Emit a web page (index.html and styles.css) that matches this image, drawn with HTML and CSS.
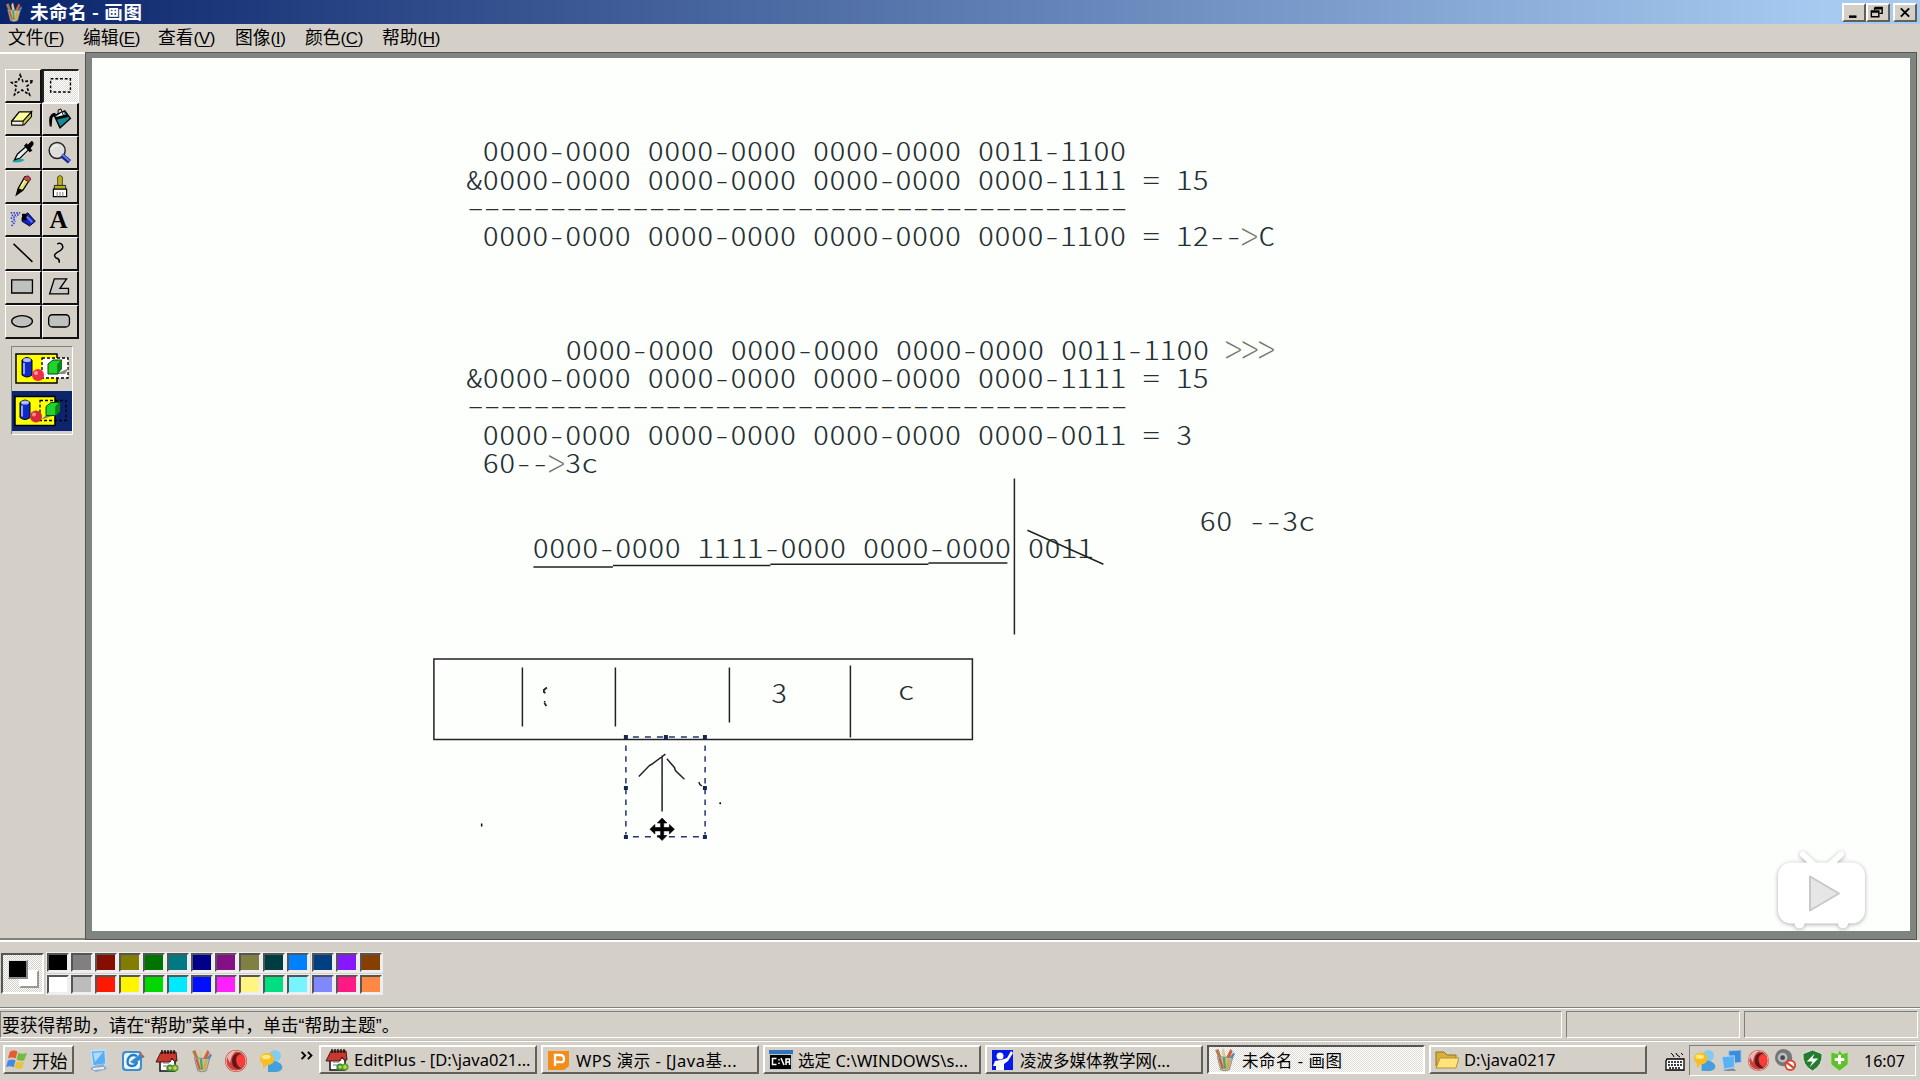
FILE: index.html
```html
<!DOCTYPE html>
<html lang="zh-CN">
<head>
<meta charset="utf-8">
<title>未命名 - 画图</title>
<link rel="stylesheet" href="styles.css">
</head>
<body>
<svg class="defs" width="0" height="0">
  <defs>
    <symbol id="paint" viewBox="0 0 20 22">
      <path d="M4 9L1 2L4 1L7 9Z" fill="#b57a4a"/><path d="M8 9L7 2L9 0L11 9Z" fill="#d9c9a0"/>
      <path d="M11 9L15 1L17 3L14 10Z" fill="#d8602c"/><path d="M14 9L18 4L19 6L16 11Z" fill="#5087c8"/>
      <path d="M3 8L17 9L14 20Q10 22 6 20Z" fill="#b8c0ad" stroke="#777c75" stroke-width=".7"/>
      <path d="M5 9L8 19" stroke="#d45a30" stroke-width="2"/><path d="M9 9L10 19" stroke="#54a34f" stroke-width="2"/><path d="M14 10L12 19" stroke="#e4a22f" stroke-width="2"/>
    </symbol>
    <symbol id="editplus" viewBox="0 0 24 24">
      <path d="M5 10H20V22H5Z" fill="#fff" stroke="#111" stroke-width="1.5"/>
      <path d="M6 3H21L22 12H19L17 9L15 13H1Z" fill="#c8382e" stroke="#4a1714"/>
      <path d="M7 1V5M10 1V5M13 1V5M16 1V5M19 1V5" stroke="#111" stroke-width="1.4"/>
      <path d="M8 14H14M8 17H12" stroke="#777"/>
      <circle cx="15" cy="19" r="3.6" fill="#338b35"/><circle cx="20" cy="19" r="3.6" fill="#58a82e"/><path d="M13 19H17M15 17V21M18 19H22M20 17V21" stroke="#f5df64"/>
    </symbol>
    <symbol id="ball" viewBox="0 0 24 24">
      <circle cx="12" cy="12" r="11" fill="#c9423c"/><circle cx="12" cy="12" r="10" fill="none" stroke="#efb9b0" stroke-width="1"/>
      <path d="M18 4Q8 3 8 12T18 20Q13 18 12 12T18 4Z" fill="#641615"/><path d="M14 8Q18 4 21 10Q21 16 16 18Q11 12 14 8" fill="#ff3c3a"/><path d="M3 8Q6 2 12 2Q7 6 6 14Z" fill="#fff" opacity=".6"/>
    </symbol>
    <symbol id="chat" viewBox="0 0 24 24">
      <circle cx="16" cy="7" r="6" fill="#82ccf2"/><path d="M9 15Q15 9 22 15Q26 21 18 23H9Z" fill="#459fdd"/>
      <path d="M1 10Q1 4 8 4T15 10T8 16L4 20V15Q1 13 1 10" fill="#f7bd21"/><ellipse cx="7" cy="8" rx="4.5" ry="2.3" fill="#ffe77d"/>
    </symbol>
  </defs>
</svg>
<div class="window">
  <header class="titlebar">
    <svg class="title-icon"><use href="#paint"/></svg>
    <h1>未命名 - 画图</h1>
    <div class="controls">
      <button><svg viewBox="0 0 24 18"><path d="M6 14H15" stroke="#000" stroke-width="3"/></svg></button>
      <button><svg viewBox="0 0 24 18"><path d="M8 3H17V10H14M8 3V6M4 7H13V14H4ZM7 4.5H17M4 8.5H13" fill="none" stroke="#000" stroke-width="1.7"/></svg></button>
      <button class="close"><svg viewBox="0 0 24 18"><path d="M7 4L17 14M17 4L7 14" stroke="#000" stroke-width="2.3"/></svg></button>
    </div>
  </header>
  <nav class="menubar">
    <span>文件<i>(<u>F</u>)</i></span><span>编辑<i>(<u>E</u>)</i></span><span>查看<i>(<u>V</u>)</i></span><span>图像<i>(<u>I</u>)</i></span><span>颜色<i>(<u>C</u>)</i></span><span>帮助<i>(<u>H</u>)</i></span>
  </nav>
  <main class="workspace">
    <aside class="toolbox">
      <div class="tools">
        <div class="tool"><svg viewBox="0 0 36 32"><path d="M15 5L18 12L29 11L22 17L25 26L17 21L9 26L11 17L6 13L13 12Z" fill="none" stroke="#000" stroke-width="1.7" stroke-dasharray="3 2"/></svg></div>
        <div class="tool active"><svg viewBox="0 0 36 32"><path d="M7 8H28V22H7Z" fill="none" stroke="#000" stroke-width="1.5" stroke-dasharray="3 2"/></svg></div>
        <div class="tool"><svg viewBox="0 0 36 32"><path d="M6 18L14 8H27L19 20H6Z" fill="#ffff9d" stroke="#000" stroke-width="1.4"/><path d="M6 18H18L27 8V13L19 22H6Z" fill="#d5d13b" stroke="#000" stroke-width="1.2"/><path d="M6 18H18V22H6Z" fill="#eee" stroke="#000"/></svg></div>
        <div class="tool"><svg viewBox="0 0 36 32"><path d="M12 12L23 7L29 15L18 25Z" fill="#138b99" stroke="#000" stroke-width="1.5"/><path d="M14 13L21 8L23 11L16 15Z" fill="#fff"/><path d="M14 15L26 12" stroke="#000" stroke-width="3"/><path d="M7 23Q5 10 12 9Q16 10 10 14L9 24" fill="#000"/><path d="M16 11V6L19 5L22 13" fill="none" stroke="#000"/></svg></div>
        <div class="tool"><svg viewBox="0 0 36 32"><path d="M6 26Q14 21 20 24Q14 28 6 26" fill="#27a6ac"/><path d="M9 24L12 18L22 9L25 12L15 22Z" fill="#e3f1ef" stroke="#000" stroke-width="1.3"/><path d="M19 9L22 6L23 8L27 4Q30 5 29 8L26 12L28 14L25 16Z"/></svg></div>
        <div class="tool"><svg viewBox="0 0 36 32"><circle cx="15" cy="14" r="8.5" fill="#dedfd9" stroke="#222" stroke-width="1.5"/><path d="M9 13Q11 8 16 9" stroke="#fff" fill="none"/><path d="M20 19L28 26" stroke="#172383" stroke-width="5"/><path d="M20 18L28 25" stroke="#6b7cf4" stroke-width="2"/></svg></div>
        <div class="tool"><svg viewBox="0 0 36 32"><path d="M11 25L13 18L20 6L25 9L18 20Z" fill="#e8df69" stroke="#000" stroke-width="1.4"/><path d="M20 6Q25 3 26 9L24 11L18 8Z" fill="#cb4548" stroke="#481717"/><path d="M13 18L18 20L11 25Z"/><path d="M16 16L20 9" stroke="#fff"/></svg></div>
        <div class="tool"><svg viewBox="0 0 36 32"><path d="M15.5 16V6Q18 3 20.500 6V16" fill="#b9b31f" stroke="#504b0d"/><path d="M12 15H24V20H12Z" fill="#b5b022" stroke="#222"/><path d="M11 19H25V27H11Z" fill="#fff" stroke="#000" stroke-width="1.3"/><path d="M15 22V27M18 22V27M21 22V27" stroke="#777"/></svg></div>
        <div class="tool"><svg viewBox="0 0 36 32"><path d="M17 13L23 8L31 17L25 22L17 17Z" fill="#1625cb" stroke="#000"/><path d="M17 9H22V16H17Z"/><path d="M5 8L15 8M6 11L14 10M5 14L11 12M6 18L10 14M6 22L10 17" stroke="#3444df" stroke-width="1.9" stroke-dasharray="1.6 1.3"/><path d="M22 12L28 18" stroke="#687df3" stroke-width="2"/></svg></div>
        <div class="tool letter">A</div>
        <div class="tool"><svg viewBox="0 0 36 32"><path d="M8 6L28 25" stroke="#000" stroke-width="1.6"/></svg></div>
        <div class="tool"><svg viewBox="0 0 36 32"><path d="M15 6Q20 4 21 9Q21 12 15 15Q10 18 14 21Q18 22 17 26" fill="none" stroke="#000" stroke-width="1.6"/></svg></div>
        <div class="tool"><svg viewBox="0 0 36 32"><path d="M6 8H28V22H6Z" fill="#bfc1be" stroke="#000" stroke-width="1.4"/></svg></div>
        <div class="tool"><svg viewBox="0 0 36 32"><path d="M12 7H25L18 17H27V23H7Z" fill="#c8c9c4" stroke="#000" stroke-width="1.4"/></svg></div>
        <div class="tool"><svg viewBox="0 0 36 32"><ellipse cx="17" cy="16" rx="11" ry="6" fill="#bfc1be" stroke="#000" stroke-width="1.4"/></svg></div>
        <div class="tool"><svg viewBox="0 0 36 32"><rect x="6" y="9" width="22" height="13" rx="4" fill="#bfc1be" stroke="#000" stroke-width="1.4"/></svg></div>
      </div>
      <div class="options">
        <svg class="option" viewBox="0 0 60 43"><rect x="4" y="6" width="41" height="29" fill="#ff0" stroke="#000" stroke-width="1.5"/><rect x="30" y="10" width="26" height="20" fill="#fff" stroke="#000" stroke-width="1.3" stroke-dasharray="3 2"/><path d="M10 12Q15 7 20 12V27Q15 31 10 27Z" fill="#1029c9" stroke="#000"/><ellipse cx="15" cy="12" rx="4" ry="2" fill="#adbdff"/><path d="M12 15V26" stroke="#8d9fff" stroke-width="2"/><path d="M44 26L57 20L53 26H42" fill="#888"/><path d="M36 16L41 12H50L46 16V26H36Z" fill="#20d32a" stroke="#064b08"/><path d="M46 16L50 12V21L46 26Z" fill="#068716"/><circle cx="26" cy="27" r="6" fill="#f12b4a"/><circle cx="24" cy="25" r="2" fill="#ff9da3"/></svg>
        <svg class="option selected" viewBox="0 0 60 39"><rect x="3" y="5" width="40" height="29" fill="#ff0" stroke="#000" stroke-width="1.5"/><rect x="28" y="9" width="26" height="20" fill="none" stroke="#000" stroke-width="1.3" stroke-dasharray="3 2"/><path d="M8 11Q13 6 18 11V26Q13 30 8 26Z" fill="#1029c9" stroke="#000"/><ellipse cx="13" cy="11" rx="4" ry="2" fill="#adbdff"/><path d="M10 14V25" stroke="#8d9fff" stroke-width="2"/><path d="M29 28L42 24H34" fill="#777"/><path d="M34 15L39 11H48L44 15V24H34Z" fill="#20d32a" stroke="#064b08"/><path d="M44 15L48 11V20L44 24Z" fill="#068716"/><circle cx="24" cy="25" r="6" fill="#d42a3f"/><circle cx="22" cy="23" r="2" fill="#ff8d8d"/></svg>
      </div>
    </aside>
    <section class="canvas">
      <svg class="drawing" viewBox="92 58 1818 873">
        <g class="digits">
          <text transform="translate(482.5 161) scale(1 .79)">0000-0000 0000-0000 0000-0000 0011-1100</text>
          <text transform="translate(466 189.5) scale(1 .79)">&amp;0000-0000 0000-0000 0000-0000 0000-1111 = 15</text>
          <text class="rule" transform="translate(464.5 216.500) scale(1.35 .79)">----------------------------------------</text>
          <text transform="translate(482.5 246) scale(1 .79)">0000-0000 0000-0000 0000-0000 0000-1100 = 12--</text>
          <text class="gt" transform="translate(1241.500 252.500) scale(1 1.35)">&gt;</text>
          <text transform="translate(1258.500 246) scale(1 .79)">C</text>
          <text transform="translate(565.500 359.500) scale(1 .79)">0000-0000 0000-0000 0000-0000 0011-1100</text>
          <text class="gt" transform="translate(1225.500 366) scale(1 1.35)">&gt;&gt;&gt;</text>
          <text transform="translate(466 388) scale(1 .79)">&amp;0000-0000 0000-0000 0000-0000 0000-1111 = 15</text>
          <text class="rule" transform="translate(464.5 415) scale(1.35 .79)">----------------------------------------</text>
          <text transform="translate(482.5 445) scale(1 .79)">0000-0000 0000-0000 0000-0000 0000-0011 = 3</text>
          <text transform="translate(482.5 473.300) scale(1 .79)">60--</text>
          <text class="gt" transform="translate(548.500 480) scale(1 1.35)">&gt;</text>
          <text transform="translate(565 473.300) scale(1 .79)">3c</text>
          <text transform="translate(532.5 558) scale(1 .79)">0000-0000 1111-0000 0000-0000 0011</text>
          <text transform="translate(1199.5 531) scale(1 .79)">60 --3c</text>
          <text transform="translate(771 702.5) scale(1 .79)">3</text>
          <text transform="translate(898 700) scale(1 .79)">c</text>
        </g>
        <g transform="translate(-.6 .5)">
          <g fill="none" stroke="#222" stroke-width="1.5">
            <path d="M1015 478V634M534 566.4H613.5M613.5 565H771M771 563.7H929M929 562.4H1008M1028 529.7L1104 563.7"/>
            <path d="M434.5 658.5H973V739H434.5ZM523 667V726M616 667V726M730 667V722M851 665V737"/>
            <path d="M662.7 755V811M666 753.7L652 764L650 765L639.4 776M667.5 758.3L675 767L676 770L685 778.7M699.5 781.5L700.5 784L702.5 785.5"/>
            <path d="M547.5 687L544.5 689.5V691.5L546 692.5M544.5 701L546 701.5M545 702.5L547 705.5" stroke-width="1.8"/>
          </g>
          <circle cx="720.8" cy="802.7" r="1"/><rect x="481.5" y="823" width="1.5" height="3"/>
          <g fill="none" stroke="#23356b" stroke-width="1.5"><path d="M633.5 736.5H706M633.5 836.3H706" stroke-dasharray="6 6"/><path d="M626.5 745V834M705.7 745V834" stroke-dasharray="5.5 5.3"/></g>
          <path d="M624.5 734.5h4v4h-4zM664.5 734.5h4v4h-4zM703.5 734.5h4v4h-4zM624.5 785.5h4v4h-4zM703.5 785.5h4v4h-4zM624.5 834.5h4v4h-4zM703.5 834.5h4v4h-4z" fill="#14245c"/>
          <path d="M662.7 817.5L667.5 822.5H664.3V827H670V824L675 828.7L670 833.5V830.4H664.3V835H667.5L662.7 840L658 835H661.2V830.4H655.5V833.5L650.5 828.7L655.5 824V827H661.2V822.5H658Z" stroke="#000" stroke-width=".6"/>
        </g>
        <g transform="translate(1 .5)">
          <g class="player"><path d="M1802 854L1815 866M1840 854L1827 866" stroke="#fff" stroke-width="6" stroke-linecap="round"/><circle cx="1798.500" cy="923" r="5" fill="#fff"/><circle cx="1842" cy="923" r="5" fill="#fff"/><rect x="1777" y="862" width="87" height="61" rx="13" fill="#fff"/></g>
          <path d="M1809 876L1838 893L1809 910Z" fill="#e6e6e6" stroke="#c8c8c8" stroke-width="2" stroke-linejoin="round"/>
        </g>
      </svg>
    </section>
  </main>
  <section class="palette">
    <div class="current"><b></b><em></em></div>
    <div class="swatches">
      <i class="c1"></i><i class="c2"></i><i class="c3"></i><i class="c4"></i><i class="c5"></i><i class="c6"></i><i class="c7"></i><i class="c8"></i><i class="c9"></i><i class="c10"></i><i class="c11"></i><i class="c12"></i><i class="c13"></i><i class="c14"></i>
      <i class="d1"></i><i class="d2"></i><i class="d3"></i><i class="d4"></i><i class="d5"></i><i class="d6"></i><i class="d7"></i><i class="d8"></i><i class="d9"></i><i class="d10"></i><i class="d11"></i><i class="d12"></i><i class="d13"></i><i class="d14"></i>
    </div>
  </section>
  <footer class="statusbar"><span class="help">要获得帮助，请在<q>“</q>帮助<q>”</q>菜单中，单击<q>“</q>帮助主题<q>”</q>。</span><span></span><span></span></footer>
  <div class="taskbar">
    <button class="start"><svg viewBox="0 0 24 22"><path d="M4 3Q8 0 12 3L10 10Q6 8 2 10Z" fill="#e65b30"/><path d="M13 4Q17 6 22 4L19 12Q15 13 11 11Z" fill="#76b943"/><path d="M2 12Q6 10 10 12L8 19Q4 17 0 19Z" fill="#4889df"/><path d="M11 13Q15 15 19 13L17 20Q13 22 9 19Z" fill="#edc137"/></svg>开始</button>
    <div class="quick">
      <svg viewBox="0 0 24 24"><path d="M5 2L19 1L20 15L7 17Z" fill="#58aef0" stroke="#b9dfff" stroke-width="1.5"/><path d="M7 4L17 3L9 13Z" fill="#afdbff"/><path d="M8 17L17 15L21 20L10 23L4 20Z" fill="#8fa9c7"/><path d="M7 20L18 19" stroke="#e5f2fa" stroke-width="2"/></svg>
      <svg viewBox="0 0 24 24"><rect x="1" y="2" width="20" height="20" rx="4" fill="#3b90d2"/><rect x="3" y="4" width="16" height="16" rx="3" fill="#eaf6ff"/><path d="M16 7Q10 4 7 10Q5 17 11 17Q15 17 16 13" fill="none" stroke="#237bc1" stroke-width="2.4"/><path d="M9 13L19 5L23 8L13 15Z" fill="#3489d0"/><path d="M19 5L23 8" stroke="#b56635" stroke-width="2"/></svg>
      <svg><use href="#editplus"/></svg><svg><use href="#paint"/></svg><svg><use href="#ball"/></svg><svg><use href="#chat"/></svg>
      <svg class="more" viewBox="0 0 14 10"><path d="M1 1L5 5L1 9M8 1L12 5L8 9" fill="none" stroke="#000" stroke-width="2"/></svg>
    </div>
    <div class="tasks">
      <button><svg><use href="#editplus"/></svg><span>EditPlus - [D:\java021...</span></button>
      <button><svg viewBox="0 0 24 24"><path d="M1 3H22V18L17 22H1Z" fill="#f58b18"/><path d="M8 18V7H13Q17 7 17 11T13 14H8" fill="none" stroke="#fff" stroke-width="2.3"/></svg><span class="wide">WPS 演示 - [Java基...</span></button>
      <button><svg viewBox="0 0 24 24"><rect y="2" width="24" height="20" fill="#b9c7d2"/><path d="M0 2H24V6H0Z" fill="#3274b6"/><path d="M1 7H22V21H1Z"/><path d="M7.500 10.500H3.500V16.500H7.500M10 11V12.500M10 14.500V16M12 10L15 17M20.500 17V11H17V17M17 14H20.500" fill="none" stroke="#fff" stroke-width="1.5"/></svg><span class="wide">选定 C:\WINDOWS\s...</span></button>
      <button><svg viewBox="0 0 24 24"><path d="M1 2H22V22H1Z" fill="#0719e6"/><circle cx="9" cy="8" r="3.5" fill="#fff"/><path d="M5 22V18H2L4 13L10 12L16 10L20 3L22 5L17 13L13 16V22Z" fill="#fff"/></svg><span>凌波多媒体教学网(...</span></button>
      <button class="current-task"><svg><use href="#paint"/></svg><span class="wide">未命名 - 画图</span></button>
      <button><svg viewBox="0 0 24 24"><path d="M1 18V4H9L12 7H21V19Z" fill="#ddaf37" stroke="#8b7229"/><path d="M1 20L5 10H24L21 20Z" fill="#ffe47e" stroke="#b39232"/></svg><span>D:\java0217</span></button>
    </div>
    <svg class="keyboard" viewBox="0 0 20 20"><path d="M6 1L8 3L9 5M11 1L12 3L15 5M16 1L18 3" fill="none" stroke="#000"/><path d="M2 7H19V18H1V9Z" fill="#fff" stroke="#000" stroke-width="1.3"/><path d="M3 10H18M3 13H18M4 16H16" stroke="#000" stroke-width="1.5" stroke-dasharray="2 1"/></svg>
    <div class="tray">
      <svg><use href="#chat"/></svg>
      <svg viewBox="0 0 24 24"><path d="M9 2L22 1V14L10 15Z" fill="#3d8cda" stroke="#a8c5e7"/><path d="M2 8L15 7V19L4 21Z" fill="#5bb2f3" stroke="#b6d3ee"/><path d="M3 22L14 20L17 23H6Z" fill="#7d8fa5"/></svg>
      <svg><use href="#ball"/></svg>
      <svg viewBox="0 0 24 24"><circle cx="10" cy="9" r="9" fill="#73777a"/><circle cx="9" cy="9" r="5" fill="#bdc0c1"/><circle cx="9" cy="9" r="2.5" fill="#44484b"/><circle cx="17" cy="17" r="6" fill="#d74632"/><circle cx="17" cy="17" r="4" fill="#fff"/><path d="M13 14L21 20" stroke="#d74632" stroke-width="2.4"/></svg>
      <svg viewBox="0 0 24 24"><path d="M12 1L22 5Q23 17 12 23Q1 17 2 5Z" fill="#267a31" stroke="#dceadb"/><path d="M14 5L6 13H12L9 19L18 10H12Z" fill="#f2fff0"/></svg>
      <svg viewBox="0 0 24 24"><path d="M3 3L10 5L12 1L15 5L21 3V16L16 20L12 23L8 20L3 16Z" fill="#64be31" stroke="#b9e99d"/><path d="M12 6V16M7 11H17" stroke="#fff" stroke-width="3"/></svg>
      <time>16:07</time>
    </div>
  </div>
</div>
</body>
</html>
```
FILE: styles.css
```css
* { box-sizing: border-box; }
body { margin: 0; background: #d4d0c8; font-family: "Noto Sans", "Noto Sans CJK SC", sans-serif; color: #000; overflow: hidden; }
.defs { display: block; }
.window { width: 1920px; height: 1080px; display: flex; flex-direction: column; background: #d4d0c8; }
button { font: inherit; padding: 0; margin: 0; color: #000; background: #d4d0c8; border: 2px solid; border-color: #fff #605f5a #605f5a #fff; border-radius: 0; }
.titlebar { height: 24px; flex: none; display: flex; align-items: center; background: linear-gradient(90deg, #0a246a, #a6caf0 95%); color: #fff; padding: 0 3px 0 5px; }
.title-icon { width: 18px; height: 21px; }
h1 { font: bold 18.5px/22px "Noto Sans CJK SC", sans-serif; letter-spacing: .6px; margin: 0 auto 2px 7px; white-space: nowrap; }
.controls { display: flex; }
.controls button { width: 24px; height: 19px; }
.controls svg { display: block; width: 20px; height: 15px; }
.controls .close { margin-left: 3px; }
.menubar { height: 28px; flex: none; display: flex; padding-left: 8px; font: 17.8px/25px "Noto Sans CJK SC", sans-serif; }
.menubar span { width: 75px; white-space: nowrap; }
.menubar span:nth-child(3) { width: 77px; }
.menubar span:nth-child(4) { width: 70px; }
.menubar span:nth-child(5) { width: 77px; }
.menubar i { font: 17px/24px "Liberation Sans", sans-serif; letter-spacing: -.4px; }
.menubar u { text-underline-offset: 2px; text-decoration-thickness: 1px; }
.workspace { height: 890px; flex: none; display: flex; padding-right: 3px; border-bottom: 2px solid #fff; }
.toolbox { width: 85px; flex: none; border-top: 2px solid #fff; border-bottom: 2px solid #808480; padding: 15px 0 0 5px; }
.tools { width: 74px; height: 270px; display: grid; grid-template-columns: 37px 37px; grid-template-rows: repeat(8, 33.7px); }
.tool { border: 1px solid; border-color: #fff #111 #111 #fff; border-right-width: 2px; border-bottom-width: 2px; }
.tool svg { display: block; width: 100%; height: 100%; }
.tool.active { border-width: 2px 1px 1px 2px; border-color: #222 #fff #fff #222; background: repeating-conic-gradient(#fff 0 25%, #dedbd5 0 50%) 0 0/2px 2px; }
.tool.letter { font: bold 25px/29px "Liberation Serif", serif; text-align: center; padding-right: 3px; }
.options { width: 62px; height: 89px; margin: 7px 0 0 6px; border: 1px solid; border-color: #808480 #fff #fff #808480; padding-top: 1px; }
.option { display: block; width: 60px; height: 43px; }
.option.selected { height: 40px; background: #0b246b; }
.canvas { flex: 1; border: solid #808480; border-width: 6px 7px 9px 7px; background: #fdfffd; outline: 1px solid #555; outline-offset: -1px; }
.drawing { display: block; width: 100%; height: 873px; }
.digits { font: 300 33px "Noto Sans CJK SC", sans-serif; font-feature-settings: "hwid" 1; letter-spacing: .02px; fill: #253033; }
.digits text { white-space: pre; }
.digits .rule { letter-spacing: -4.27px; }
.digits .gt { fill: #77776a; font-weight: 100; }
.player { filter: drop-shadow(0 1px 2px #aaa); }
.palette { height: 66px; flex: none; border-bottom: 1px solid #808080; display: flex; gap: 3px; padding: 11px 0 0 1px; }
.current { width: 43px; height: 41px; border: 2px solid; border-color: #555 #fff #fff #555; background: repeating-conic-gradient(#fff 0 25%, #d4d0c8 0 50%) 0 0/2px 2px; display: grid; grid-template: 10px 9px 9px / 11px 9px 11px; padding: 5px 0 0 5px; }
.current b { grid-area: 1 / 1 / 3 / 3; background: #000; border: 1px solid; border-color: #ddd #888 #888 #ddd; border-width: 1px 2px 2px 1px; z-index: 1; }
.current em { grid-area: 2 / 2 / 4 / 4; background: #fff; border: 2px solid; border-color: #fff #999 #999 #fff; }
.swatches { display: grid; grid-template-columns: repeat(14, 22px); grid-template-rows: 19px 19px; gap: 3px 2.05px; }
.swatches i { border: 2px solid; border-color: #555 #eee #eee #555; outline: 1px solid #eee; }
.c1 { background: #000; } .c2 { background: #808080; } .c3 { background: #850e00; } .c4 { background: #827c00; } .c5 { background: #007300; } .c6 { background: #007982; } .c7 { background: #00008b; } .c8 { background: #850f85; } .c9 { background: #808044; } .c10 { background: #003d40; } .c11 { background: #0080ff; } .c12 { background: #004080; } .c13 { background: #8518ff; } .c14 { background: #854000; }
.d1 { background: #fff; } .d2 { background: #bcbcbc; } .d3 { background: #ff1900; } .d4 { background: #fff500; } .d5 { background: #00d800; } .d6 { background: #00e9ff; } .d7 { background: #0010ff; } .d8 { background: #ff20ff; } .d9 { background: #fff580; } .d10 { background: #00df80; } .d11 { background: #76f5ff; } .d12 { background: #8088ff; } .d13 { background: #ff1985; } .d14 { background: #ff8842; }
.statusbar { height: 33px; flex: none; display: flex; gap: 4px; border-top: 1px solid #fff; border-bottom: 1px solid #c1beb7; padding: 2px 2px 2px 0; }
.statusbar span { border: 1px solid; border-color: #808080 #fff #fff #808080; width: 174px; }
.statusbar .help { flex: 1; font: 17.8px/25px "Noto Sans CJK SC", sans-serif; padding-left: 1px; white-space: nowrap; }
q { quotes: none; display: inline-block; font-family: "Liberation Sans", sans-serif; width: 6px; }
.taskbar { height: 39px; flex: none; display: flex; border-top: 1px solid #fff; padding: 3px 4px 0 3px; }
.taskbar button { height: 29px; display: flex; align-items: center; }
.start { width: 71px; gap: 3px; font: 17.8px/24px "Noto Sans CJK SC", sans-serif !important; padding-left: 1px; white-space: nowrap; }
.start svg { width: 23px; height: 21px; }
.quick { display: flex; width: 245px; height: 32px; padding-left: 12px; align-items: center; gap: 10.6px; }
.quick svg { width: 24px; height: 24px; flex: none; }
.quick .more { width: 14px; height: 9px; margin: -12px 0 0 6px; }
.tasks { display: flex; gap: 4px; width: 1346px; }
.tasks button { width: 218px; gap: 5px; padding-left: 4px; font-size: 16.5px; white-space: nowrap; }
.tasks .wide { letter-spacing: .5px; }
.tasks button:nth-child(3) .wide { letter-spacing: .1px; }
.tasks svg { width: 24px; height: 24px; flex: none; }
.tasks .current-task { border-color: #555 #fff #fff #555; background: repeating-conic-gradient(#fff 0 25%, #dedbd5 0 50%) 0 0/2px 2px; }
.keyboard { width: 20px; height: 20px; margin: 7px 4px 0 0; flex: none; }
.tray { width: 227px; height: 31px; border: 1px solid; border-color: #808080 #fff #fff #808080; display: flex; align-items: center; gap: 4px; padding-left: 3px; white-space: nowrap; }
.tray svg { width: 23px; height: 23px; flex: none; }
.tray time { font-size: 16px; margin-left: 9px; }
```
